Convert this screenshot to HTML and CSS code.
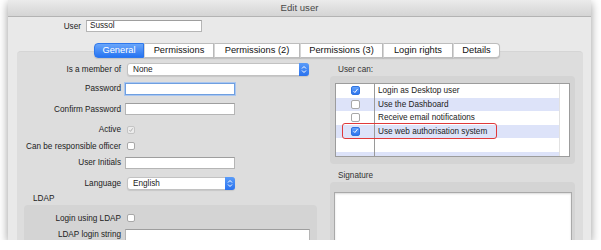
FILE: index.html
```html
<!DOCTYPE html>
<html lang="en">
<head>
    <meta charset="UTF-8">
    <meta name="viewport" content="width=device-width, initial-scale=1.0">
    <title>Edit user</title>
    <link rel="stylesheet" href="styles.css">
</head>
<body>

    <div class="window">
        <div class="titlebar">Edit user</div>

        <div class="user-row">
            <span class="user-label">User</span>
            <div class="field user-field">Sussol</div>
        </div>

        <div class="tabs">
            <div class="tab active" style="width: 50px">General</div>
            <div class="tab" style="width: 70px">Permissions</div>
            <div class="tab" style="width: 86px">Permissions (2)</div>
            <div class="tab" style="width: 83px">Permissions (3)</div>
            <div class="tab" style="width: 70px">Login rights</div>
            <div class="tab" style="width: 47px">Details</div>
        </div>

        <div class="pane">
            <div class="left-col">
                <div class="row">
                    <span class="lbl">Is a member of</span>
                    <div class="select member-select">
                        <span>None</span>
                        <span class="stepper">
                            <svg width="6" height="9" viewBox="0 0 6 9"><path d="M1 3.5 3 1.5 5 3.5M1 5.5 3 7.5 5 5.5" fill="none" stroke="#fff" stroke-width="1"/></svg>
                        </span>
                    </div>
                </div>
                <div class="row">
                    <span class="lbl">Password</span>
                    <div class="field focused"></div>
                </div>
                <div class="row tall">
                    <span class="lbl">Confirm Password</span>
                    <div class="field"></div>
                </div>
                <div class="row">
                    <span class="lbl">Active</span>
                    <span class="check disabled">
                        <svg width="8" height="8" viewBox="0 0 8 8"><path d="M1.8 4.2 3.3 5.8 6.3 1.8" fill="none" stroke="#9a9a9a" stroke-width="1"/></svg>
                    </span>
                </div>
                <div class="row tight">
                    <span class="lbl">Can be responsible officer</span>
                    <span class="check"></span>
                </div>
                <div class="row">
                    <span class="lbl">User Initials</span>
                    <div class="field"></div>
                </div>
                <div class="row tall">
                    <span class="lbl">Language</span>
                    <div class="select language-select">
                        <span>English</span>
                        <span class="stepper">
                            <svg width="6" height="9" viewBox="0 0 6 9"><path d="M1 3.5 3 1.5 5 3.5M1 5.5 3 7.5 5 5.5" fill="none" stroke="#fff" stroke-width="1"/></svg>
                        </span>
                    </div>
                </div>
                <div class="ldap-title">LDAP</div>
                <div class="ldap-box">
                    <div class="row tight">
                        <span class="lbl">Login using LDAP</span>
                        <span class="check"></span>
                    </div>
                    <div class="row">
                        <span class="lbl">LDAP login string</span>
                        <div class="field wide"></div>
                    </div>
                </div>
            </div>

            <div class="right-col">
                <div class="group-title">User can:</div>
                <div class="group-box">
                    <div class="list">
                        <div class="list-rows">
                            <div class="list-row">
                                <span class="list-check"><span class="check on"><svg width="8" height="8" viewBox="0 0 8 8"><path d="M1.8 4.2 3.3 5.8 6.3 1.8" fill="none" stroke="#fff" stroke-width="1.1"/></svg></span></span>
                                <span class="list-text">Login as Desktop user</span>
                            </div>
                            <div class="list-row">
                                <span class="list-check"><span class="check"></span></span>
                                <span class="list-text">Use the Dashboard</span>
                            </div>
                            <div class="list-row">
                                <span class="list-check"><span class="check"></span></span>
                                <span class="list-text">Receive email notifications</span>
                            </div>
                            <div class="list-row">
                                <span class="list-check"><span class="check on"><svg width="8" height="8" viewBox="0 0 8 8"><path d="M1.8 4.2 3.3 5.8 6.3 1.8" fill="none" stroke="#fff" stroke-width="1.1"/></svg></span></span>
                                <span class="list-text">Use web authorisation system</span>
                            </div>
                            <div class="list-row">
                                <span class="list-check"></span>
                                <span class="list-text"></span>
                            </div>
                            <div class="list-row">
                                <span class="list-check"></span>
                                <span class="list-text"></span>
                            </div>
                        </div>
                        <div class="list-gutter"></div>
                        <div class="highlight"></div>
                    </div>
                </div>

                <div class="group-title signature-title">Signature</div>
                <div class="group-box signature-box">
                    <div class="textarea"></div>
                </div>
            </div>
        </div>
    </div>

</body>
</html>
```

FILE: styles.css
```css
body {
    margin: 0;
    background-color: #fff;
    font-family: "Liberation Sans", Arial, sans-serif;
    font-size: 8.2px;
    color: #222;
}

.window {
    margin-left: 8px;
    width: 583px;
    height: 240px;
    background-color: #e9e9e9;
    box-shadow: 0 3px 9px rgba(0, 0, 0, 0.4);
    display: flex;
    flex-direction: column;
    overflow: hidden;
}

.titlebar {
    height: 16px;
    line-height: 16px;
    flex-shrink: 0;
    text-align: center;
    font-size: 9.6px;
    color: #4a4a4a;
    background: linear-gradient(#ebebeb, #d4d4d4);
    border-bottom: 1px solid #b3b3b3;
}

.user-row {
    display: flex;
    align-items: center;
    margin-top: 3px;
    flex-shrink: 0;
}

.user-label {
    width: 73px;
    text-align: right;
    margin-right: 5px;
}

.field {
    height: 12px;
    width: 110px;
    box-sizing: border-box;
    background-color: #fff;
    border: 1px solid #b5b5b5;
    border-top-color: #9e9e9e;
    padding-left: 3px;
    line-height: 10px;
}

.user-field {
    width: 116px;
}

.field.focused {
    border: 1px solid #6f9fe0;
    box-shadow: 0 0 0 1px #a9c6f0;
}

.field.wide {
    width: 185px;
}

.tabs {
    display: flex;
    margin: 11px 0 -7px 86px;
    height: 15px;
    position: relative;
    z-index: 1;
    flex-shrink: 0;
}

.tab {
    box-sizing: border-box;
    height: 15px;
    line-height: 13px;
    text-align: center;
    font-size: 9.3px;
    color: #111;
    background-color: #fff;
    border: 1px solid #bdbdbd;
    border-left: 1px solid #d6d6d6;
    box-shadow: 0 1px 1px rgba(0, 0, 0, 0.12);
}

.tab:last-child {
    border-radius: 0 4px 4px 0;
}

.tab.active {
    color: #fff;
    border: 1px solid #2f78ec;
    border-radius: 4px 0 0 4px;
    background: linear-gradient(#6aa6fa, #2674f2);
}

.pane {
    flex: 1;
    display: flex;
    margin: 0 8px 0 9px;
    background-color: #dddddd;
    border-radius: 4px 4px 0 0;
    border-top: 1px solid #d5d5d5;
}

.left-col {
    width: 300px;
    padding-top: 8px;
}

.row {
    display: flex;
    align-items: center;
    height: 19px;
}

.row.tall {
    height: 22px;
}

.row.tight {
    height: 14px;
}

.lbl {
    width: 104px;
    margin-right: 4px;
    text-align: right;
    white-space: nowrap;
}

.select {
    display: flex;
    align-items: center;
    justify-content: space-between;
    height: 13px;
    box-sizing: border-box;
    margin-left: 2px;
    padding-left: 5px;
    background-color: #fff;
    border: 1px solid #c2c2c2;
    border-radius: 3px;
    box-shadow: 0 1px 1px rgba(0, 0, 0, 0.1);
}

.member-select {
    width: 182px;
}

.language-select {
    width: 108px;
}

.stepper {
    width: 10px;
    height: 13px;
    margin-right: -1px;
    display: flex;
    align-items: center;
    justify-content: center;
    border-radius: 0 3px 3px 0;
    background: linear-gradient(#5a9cf9, #2a72ee);
}

.check {
    width: 8px;
    height: 8px;
    margin-left: 2px;
    box-sizing: border-box;
    display: flex;
    align-items: center;
    justify-content: center;
    background-color: #fff;
    border: 1px solid #a8a8a8;
    border-radius: 2px;
}

.check.disabled {
    background-color: #ececec;
    border-color: #c4c4c4;
}

.check.on {
    border: 1px solid #2f73e0;
    background: linear-gradient(#64a2fa, #2d74ee);
}

.ldap-title {
    height: 11px;
    line-height: 9px;
    padding-left: 16px;
}

.ldap-box {
    margin-left: 7px;
    width: 293px;
    height: 60px;
    padding-top: 6px;
    background-color: #d4d4d4;
    border-radius: 4px 4px 0 0;
}

.ldap-box .lbl {
    width: 97px;
}

.right-col {
    width: 245px;
    margin-left: 13px;
    padding-top: 12px;
}

.group-title {
    height: 12px;
    line-height: 12px;
    padding-left: 8px;
    color: #333;
}

.group-box {
    background-color: #d4d4d4;
    border-radius: 4px;
    padding: 7px 5px;
    height: 74px;
}

.list {
    position: relative;
    display: flex;
    height: 74px;
    box-sizing: border-box;
    border: 1px solid #9c9c9c;
    background-color: #fff;
    overflow: hidden;
}

.list-rows {
    width: 223px;
}

.list-row {
    display: flex;
    height: 13.5px;
}

.list-row:nth-child(even) {
    background-color: #dde3f9;
}

.list-check {
    width: 38px;
    display: flex;
    align-items: center;
    justify-content: center;
    border-right: 1px solid #9a9a9a;
}

.list-check .check {
    width: 9px;
    height: 9px;
    margin-left: 0;
}

.list-text {
    padding-left: 3px;
    line-height: 13.5px;
    white-space: nowrap;
}

.list-gutter {
    flex: 1;
    border-left: 1px solid #e2e2e2;
}

.highlight {
    position: absolute;
    left: 6px;
    top: 39px;
    width: 155px;
    height: 16px;
    box-sizing: border-box;
    border: 1.5px solid #e0393a;
    border-radius: 3px;
}

.signature-title {
    margin-top: 6px;
}

.signature-box {
    height: 60px;
    padding: 10px 3px 0 4px;
    border-radius: 4px 4px 0 0;
}

.textarea {
    height: 60px;
    background-color: #fff;
    border: 1px solid #a9a9a9;
    box-shadow: inset 0 1px 2px rgba(0, 0, 0, 0.15);
}
```
